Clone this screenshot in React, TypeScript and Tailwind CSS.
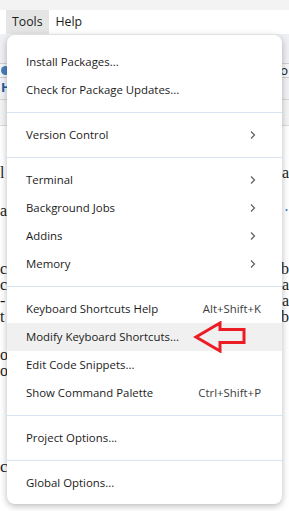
import React from 'react';

type Item =
  | { kind: 'item'; label: string; shortcut?: string; submenu?: boolean; active?: boolean }
  | { kind: 'sep' };

const items: Item[] = [
  { kind: 'item', label: 'Install Packages...' },
  { kind: 'item', label: 'Check for Package Updates...' },
  { kind: 'sep' },
  { kind: 'item', label: 'Version Control', submenu: true },
  { kind: 'sep' },
  { kind: 'item', label: 'Terminal', submenu: true },
  { kind: 'item', label: 'Background Jobs', submenu: true },
  { kind: 'item', label: 'Addins', submenu: true },
  { kind: 'item', label: 'Memory', submenu: true },
  { kind: 'sep' },
  { kind: 'item', label: 'Keyboard Shortcuts Help', shortcut: 'Alt+Shift+K' },
  { kind: 'item', label: 'Modify Keyboard Shortcuts...', active: true },
  { kind: 'item', label: 'Edit Code Snippets...' },
  { kind: 'item', label: 'Show Command Palette', shortcut: 'Ctrl+Shift+P' },
  { kind: 'sep' },
  { kind: 'item', label: 'Project Options...' },
  { kind: 'sep' },
  { kind: 'item', label: 'Global Options...' },
];

function Chevron() {
  return (
    <svg width="8" height="10" viewBox="0 0 8 10" className="mr-[4px] shrink-0">
      <path d="M2 1.5 L5.5 5 L2 8.5" fill="none" stroke="#5f5f5f" strokeWidth="1.2" />
    </svg>
  );
}

function RedArrow() {
  // hand-drawn annotation arrow pointing left
  return (
    <svg width="54" height="32" viewBox="0 0 54 32" className="absolute left-[192px] top-[321px]">
      <path
        d="M4 16 L28 2 L28 8.5 L52 8.5 L52 21.5 L28 21.5 L28 30 Z"
        fill="none"
        stroke="#ec1c24"
        strokeWidth="3"
        strokeLinejoin="miter"
      />
    </svg>
  );
}

export default function App() {
  return (
    <div className="relative h-[511px] w-[289px] overflow-hidden bg-white font-['Open_Sans','Noto_Sans',sans-serif] text-[#1b1b1b]">
      {/* window chrome behind */}
      <div className="h-[10px] bg-[#f3f3f3]" />
      <div className="flex h-[24px] items-center bg-white text-[12.3px]">
        <div className="ml-[6px] flex h-full items-center bg-[#e5e5e5] px-[6px]">Tools</div>
        <div className="px-[7px]">Help</div>
      </div>

      {/* background workspace (mostly covered) */}
      <div className="flex flex-col">
        <div className="h-[30px] border-b border-[#d0d0d0] bg-[#eef0f3]" />
        <div className="flex h-[14px] items-center border-b border-[#cfcfcf] bg-[#f5f6f8] pl-[1px]">
          <span className="h-[9px] w-[9px] rounded-full bg-[#4a7ebb]" />
          <span className="ml-auto pr-[1px] text-[13px] leading-none">ro</span>
        </div>
        <div className="h-[22px] border-b border-[#d6d6d6] bg-[#f0f2f5] pl-[1px] text-[13px] font-bold text-[#1c5a9c]">H</div>
        <div className="h-[26px] border-b border-[#dcdcdc] bg-[#f4f4f4]" />
        <div className="flex flex-col gap-[2px] bg-white pt-[40px] font-['Liberation_Serif',serif] text-[16px] leading-[14px]">
          <div className="flex justify-between"><span>l</span><span>a</span></div>
          <div className="h-[20px]" />
          <div className="flex justify-between"><span>a</span><span className="text-[#2b7bd1]">·</span></div>
          <div className="h-[40px]" />
          <div className="flex justify-between"><span>c</span><span>b</span></div>
          <div className="flex justify-between"><span>c</span><span>a</span></div>
          <div className="flex justify-between"><span>-</span><span>a</span></div>
          <div className="flex justify-between"><span>t</span><span>b</span></div>
          <div className="h-[20px]" />
          <div><span>o</span></div>
          <div><span>o</span></div>
          <div className="h-[78px]" />
          <div className="whitespace-nowrap text-[17px]">ctions &nbsp;·ico, Pane Layout, Tuner Cons</div>
        </div>
      </div>

      {/* Tools dropdown */}
      <div className="absolute left-[7px] top-[35px] w-[275px] rounded-[8px] bg-white pb-[7px] pt-[13px] text-[11.4px] shadow-[0_2px_7px_rgba(0,0,0,0.28)]">
        {items.map((it, i) =>
          it.kind === 'sep' ? (
            <div key={i} className="flex h-[17px] items-center">
              <div className="h-px w-full bg-[#d9e4f2]" />
            </div>
          ) : (
            <div
              key={i}
              className={`flex h-[28px] items-center pl-[19px] pr-[21px] ${it.active ? 'bg-[#f0f0f0]' : ''}`}
            >
              <span className="whitespace-nowrap">{it.label}</span>
              <span className="ml-auto flex items-center">
                {it.shortcut && <span className="text-[#3c3c3c]">{it.shortcut}</span>}
                {it.submenu && <Chevron />}
              </span>
            </div>
          )
        )}
      </div>

      <RedArrow />
    </div>
  );
}
